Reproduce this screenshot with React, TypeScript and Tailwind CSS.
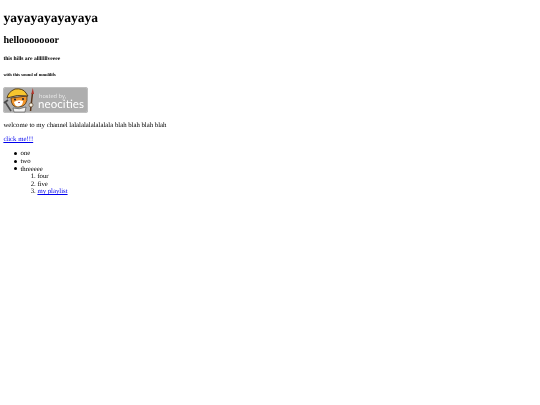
export default function App() {
  return (
    <div className="min-h-[405px] bg-white text-black px-[3.375px] text-[6.75px] leading-[7.6px] blur-[0.25px] [text-rendering:geometricPrecision] [font-family:'Liberation_Serif',serif]">
      <h1 className="text-[13.5px] leading-[15.6px] font-bold pt-[10px] mb-[9px]">yayayayayayaya</h1>
      <h2 className="text-[10.125px] leading-[11.6px] font-bold mb-[9.4px]">hellooooooor</h2>
      <h5 className="text-[5.6px] leading-[6.4px] font-bold mb-[10.4px]">this hills are alllllllveeee</h5>
      <h6 className="text-[4.5px] leading-[5.2px] font-bold mb-[9.4px]">with this sound of mmdilifs</h6>
      <svg width="85" height="26" viewBox="0 0 85 26" className="block">
        <rect x="0" y="0" width="85" height="26" rx="2.5" fill="#aeaeae" />
        <rect x="0.5" y="0.5" width="84" height="25" rx="2.5" fill="none" stroke="#c4c4c4" strokeWidth="0.8" />
        <path d="M2 14 L3.5 17 L8 24 M1 16 L5 13" stroke="#4a4a4a" strokeWidth="1.6" fill="none" />
        <path d="M8 11 Q8 21 16 20 Q25 19 24 9 Z" fill="#f2952a" stroke="#4a3215" strokeWidth="0.8" />
        <path d="M4 11 Q5 5 12 2 Q20 1 23 6 L25 9 Q14 7 4 11Z" fill="#f6c52f" stroke="#4a3215" strokeWidth="0.9" />
        <path d="M11 15 Q15 12 20 14 Q20 19 15 19.5 Q12 19.5 11 15Z" fill="#fff" />
        <circle cx="12" cy="12.5" r="1" fill="#222" />
        <circle cx="20" cy="12" r="1" fill="#222" />
        <path d="M15 15.5 h2" stroke="#a33" strokeWidth="0.8" />
        <path d="M10 21 Q16 23 23 20 L22 25 L11 25Z" fill="#f2f2f2" stroke="#444" strokeWidth="0.6" />
        <path d="M29.5 6 L27.5 24" stroke="#5a3418" strokeWidth="1.5" />
        <path d="M29.8 1 L31 7 L28.3 7Z" fill="#b3352c" />
        <circle cx="28" cy="18" r="2" fill="#f5efe0" stroke="#4a3215" strokeWidth="0.6" />
        <text x="36" y="10.5" fontSize="5.6" fill="#ececec" fontFamily="Open Sans, sans-serif">hosted by,</text>
        <text x="35" y="21" fontSize="11.5" fill="#ffffff" fontFamily="Lato, sans-serif" textLength="46">neocities</text>
      </svg>
      <p className="mt-[8.75px] mb-[6.75px]">welcome to my channel lalalalalalalalala blah blah blah blah</p>
      <p className="mb-[6.75px]"><a href="#" className="text-[#0000ee] underline">click me!!!</a></p>
      <ul className="list-none pl-[17px] mb-[6.75px]">
        <li className="relative before:absolute before:left-[-6px] before:top-[1.6px] before:size-[3px] before:rounded-full before:bg-black">one</li>
        <li className="relative before:absolute before:left-[-6px] before:top-[1.6px] before:size-[3px] before:rounded-full before:bg-black">two</li>
        <li className="relative before:absolute before:left-[-6px] before:top-[1.6px] before:size-[3px] before:rounded-full before:bg-black">
          threeeee
          <ol className="list-decimal pl-[17px]">
            <li>four</li>
            <li>five</li>
            <li><a href="#" className="text-[#0000ee] underline">my playlist</a></li>
          </ol>
        </li>
      </ul>
    </div>
  );
}
